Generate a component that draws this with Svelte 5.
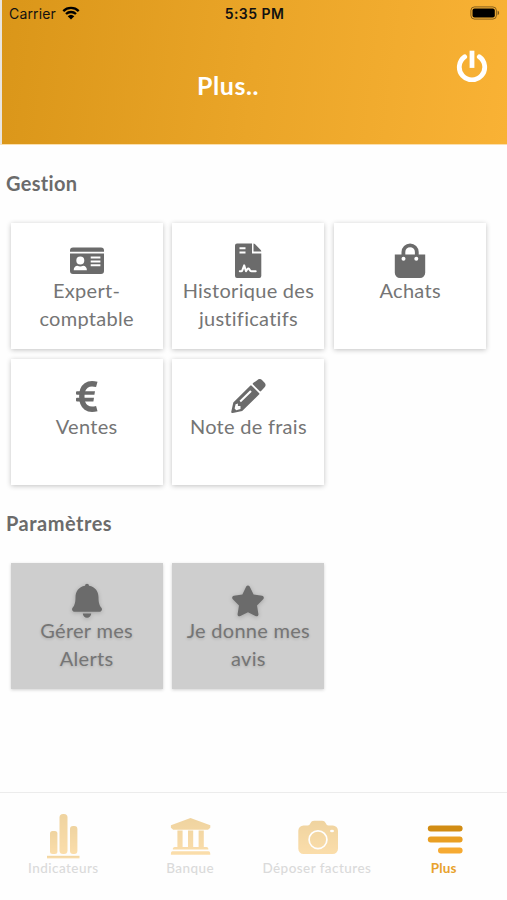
<script>
  const sections = [
    {
      title: 'Gestion',
      muted: false,
      cards: [
        { icon: 'id', lines: ['Expert-', 'comptable'] },
        { icon: 'file', lines: ['Historique des', 'justificatifs'] },
        { icon: 'bag', lines: ['Achats'] },
        { icon: 'euro', lines: ['Ventes'] },
        { icon: 'pencil', lines: ['Note de frais'] }
      ]
    },
    {
      title: 'Paramètres',
      muted: true,
      cards: [
        { icon: 'bell', lines: ['Gérer mes', 'Alerts'] },
        { icon: 'star', lines: ['Je donne mes', 'avis'] }
      ]
    }
  ];
  const tabs = [
    { icon: 'bars', label: 'Indicateurs', active: false },
    { icon: 'bank', label: 'Banque', active: false },
    { icon: 'camera', label: 'Déposer factures', active: false },
    { icon: 'plus', label: 'Plus', active: true }
  ];
</script>

{#snippet cardIcon(name)}
  <svg class="icon" viewBox="0 0 36 36" width="36" height="36" fill="currentColor">
    {#if name === 'id'}
      <path fill-rule="evenodd" d="M4 4.4h28a3 3 0 0 1 3 3v1.3H1V7.400a3 3 0 0 1 3-3zM1 10.600h34V28a3 3 0 0 1-3 3H4a3 3 0 0 1-3-3zM11.300 13.600a4 4 0 1 0 0 8 4 4 0 0 0 0-8zM4.700 27.300h13.200c0-3-1.700-4.600-3.700-4.600-1.900 1-3.900 1-5.800 0-2 0-3.700 1.600-3.700 4.600zM21.700 13.500v2h9.700v-2zM21.700 17.400v2h9.700v-2zM21.700 21.300v2h9.700v-2z" />
    {:else if name === 'file'}
      <path d="M7 .5h15v10h9.300V33a2 2 0 0 1-2 2H7a2 2 0 0 1-2-2V2.500a2 2 0 0 1 2-2zM23.500.5c.6 0 1 .2 1.400.6l5.800 5.800c.4.4.6.9.6 1.600h-7.800z" />
      <path d="M9.500 5.300h6M9.500 9.500h6" stroke="#fff" stroke-width="1.900" />
      <path d="M9.800 28.300h1.300c.7 0 1-.3 1.200-.9l1.900-5 1.800 5.800 1.500-2.200c.5-.7 1.200-.5 1.700.2l1 1.400c.4.6.8.700 1.500.7h4" fill="none" stroke="#fff" stroke-width="2" stroke-linecap="round" stroke-linejoin="round" />
    {:else if name === 'bag'}
      <path d="M2.800 11.500h30.400v18.300A5.200 5.200 0 0 1 28 35H8a5.200 5.200 0 0 1-5.200-5.200z" />
      <path d="M11.400 15.500V9a6.700 6.700 0 0 1 13.400 0v6.500" fill="none" stroke="currentColor" stroke-width="3.800" />
      <circle cx="11.500" cy="15.700" r="2" fill="#fff" />
      <circle cx="24.300" cy="15.700" r="2" fill="#fff" />
    {:else if name === 'euro'}
      <path d="M27.800 5.400c-8.300-2.300-15 1-15 12.100s6.700 14.400 15 12.100" fill="none" stroke="currentColor" stroke-width="5.400" />
      <path d="M8 12.200h18l-.6 3.600H8a1 1 0 0 1-1-1v-1.600a1 1 0 0 1 1-1zM8 18.800h17l-.6 3.600H8a1 1 0 0 1-1-1v-1.600a1 1 0 0 1 1-1z" />
    {:else if name === 'pencil'}
      <path d="M27.200 1.200a3.600 3.600 0 0 1 5 0l2.200 2.200a3.600 3.600 0 0 1 0 5l-3.300 3.700a1 1 0 0 1-1.500 0l-6.500-6.500a1 1 0 0 1 0-1.500z" />
      <path fill-rule="evenodd" d="M20.200 6.800a1 1 0 0 1 1.500 0l7.300 7.300a1 1 0 0 1 0 1.500L12.200 32 2.800 34a1.200 1.200 0 0 1-1.500-1.500l2-9zM20.200 11.300l-10.700 10.500 1.400 1.400L21.700 12.700zM5.600 25.200l-1 4.400 1.600 1.600 4.300-1.100v-3H7.900v-2.500z" />
    {:else if name === 'bell'}
      <path d="M20 2.700a2 2 0 1 0-4 0c-6.500 1.200-9.500 5.900-9.500 11.500 0 6.300-1.300 8.500-2.900 10.500C2.500 26 3 28.700 5.200 28.700h25.600c2.200 0 2.700-2.700 1.600-4-1.600-2-2.900-4.200-2.900-10.500 0-5.600-3-10.300-9.500-11.500zM13.800 30.600a4.200 4.200 0 0 0 8.400 0z" />
    {:else if name === 'star'}
      <path d="M16.200 3.500c.8-1.500 2.700-1.500 3.500 0l3.900 8 8.500 1.300c1.700.3 2.300 2.100 1.100 3.400L27 22.500l1.400 8.500c.3 1.700-1.400 2.800-2.900 2.100L18 29.200l-7.600 3.900C8.900 33.800 7.300 32.700 7.600 31L9 22.500l-6.200-6.300c-1.200-1.200-.6-3.100 1.100-3.400l8.500-1.300z" />
    {/if}
  </svg>
{/snippet}

{#snippet tabIcon(name)}
  <svg class="tab-icon" viewBox="0 0 44 46" width="44" height="46" fill="url(#amber)">
    {#if name === 'bars'}
      <rect x="9" y="18" width="7.400" height="23" rx="2.500" />
      <rect x="18.500" y="1" width="8" height="40" rx="3.500" />
      <rect x="29" y="13" width="7.400" height="28" rx="3" />
      <rect x="6" y="42.800" width="32.500" height="2.600" />
    {:else if name === 'bank'}
      <path d="M22.500 5 42.300 12.200v2.500l-2.300 2H5.200l-2.300-2v-2.500zM9.400 17.500h5.200V34H9.400zM20 17.500h5.200V34H20zM30.600 17.500h5.200V34h-5.200zM6.800 34h31.600c1.500 0 2 1 2 2.500H4.800c0-1.500.5-2.500 2-2.500zM4.500 38.200h36c1.300 0 1.800.8 1.800 3.600H2.900c0-2.800.4-3.600 1.600-3.600z" />
    {:else if name === 'camera'}
      <path d="M8.500 12.500h4.200c1.500 0 1.800-.6 2.700-2.200.9-1.700 1.900-2.500 3.700-2.500h8c1.800 0 2.800.8 3.700 2.500.9 1.600 1.200 2.200 2.700 2.200h4.300a5.200 5.200 0 0 1 5.200 5.200v18a5.200 5.200 0 0 1-5.200 5.200H8.500a5.200 5.200 0 0 1-5.200-5.200v-18a5.200 5.200 0 0 1 5.200-5.200z" />
      <circle cx="23" cy="26.700" r="8.900" fill="none" stroke="#fff" stroke-width="1.700" />
      <ellipse cx="37" cy="18" rx="2" ry="1.200" fill="#fff" />
    {:else}
      <rect x="5.800" y="12.500" width="34.800" height="6" rx="3" fill="#d18c13" />
      <rect x="5.800" y="23.600" width="34.800" height="6" rx="3" fill="#e99f23" />
      <rect x="16" y="34.600" width="24.600" height="6" rx="3" fill="#f6aa32" />
    {/if}
  </svg>
{/snippet}

<svg class="defs" width="0" height="0">
  <defs>
    <linearGradient id="amber" x1="0" y1="0" x2="0" y2="1">
      <stop offset="0" stop-color="#dc9a1f" />
      <stop offset="1" stop-color="#f7b23a" />
    </linearGradient>
  </defs>
</svg>

<div class="screen">
  <header>
    <div class="status">
      <div class="carrier">
        <span>Carrier</span>
        <svg viewBox="0 0 18 14" width="18" height="14">
          <path d="M1.300 5.100a11 11 0 0 1 15.400 0M4 8a7.200 7.200 0 0 1 10 0" fill="none" stroke="#000" stroke-width="2.300" />
          <path d="M9 13.500 5.700 10.300a4.800 4.800 0 0 1 6.600 0z" />
        </svg>
      </div>
      <div class="time">5:35 PM</div>
      <svg class="battery" viewBox="0 0 30 14" width="30" height="14">
        <rect x=".9" y=".9" width="25.500" height="12.200" rx="3.600" fill="none" stroke="#000" stroke-opacity=".45" />
        <rect x="2.500" y="2.500" width="22.300" height="9" rx="2" />
        <path d="M27.600 4.800c2 .6 2 3.800 0 4.400z" fill-opacity=".5" />
      </svg>
    </div>
    <div class="bar">
      <h1>Plus..</h1>
      <svg class="power" viewBox="0 0 32 32" width="32" height="32" fill="none" stroke="#fff" stroke-width="4.800" stroke-linecap="round">
        <path d="M8.700 6.800a12.700 12.700 0 1 0 14.600 0" />
        <path d="M16 .7v17.200" stroke-width="4.800" stroke-linecap="butt" />
      </svg>
    </div>
  </header>

  <main>
    {#each sections as section}
      <section class:muted={section.muted}>
        <h2>{section.title}</h2>
        <div class="grid">
          {#each section.cards as card}
            <div class="card">
              {@render cardIcon(card.icon)}
              {#each card.lines as line}
                <span>{line}</span>
              {/each}
            </div>
          {/each}
        </div>
      </section>
    {/each}
  </main>

  <nav>
    {#each tabs as tab}
      <div class="tab" class:active={tab.active}>
        {@render tabIcon(tab.icon)}
        <span>{tab.label}</span>
      </div>
    {/each}
  </nav>
</div>

<style>
  :global(body) { margin: 0; background: #fefefe; }
  .defs { position: absolute; }
  .screen {
    width: 507px;
    height: 900px;
    display: flex;
    flex-direction: column;
    overflow: hidden;
    background: #fefefe;
    color: #6b6b6b;
    font-family: Lato, "Noto Sans", sans-serif;
  }
  header {
    box-sizing: border-box;
    height: 145px;
    flex: none;
    border-left: 2px solid #e9e5df;
    border-bottom: 1px solid #fbdfae;
    background: linear-gradient(97deg, #da9619 0%, #eaa528 50%, #f9b235 100%);
  }
  .status {
    height: 28px;
    display: grid;
    grid-template-columns: 1fr auto 1fr;
    align-items: center;
    padding: 0 7px 0 7px;
    color: #111;
    font: 14px/28px Inter, sans-serif;
  }
  .carrier { display: flex; align-items: center; gap: 6px; letter-spacing: .15px; }
  .carrier svg { margin-top: -3px; }
  .time { font-weight: 600; letter-spacing: .45px; }
  .battery { justify-self: end; margin-top: -2px; }
  .bar { display: flex; position: relative; justify-content: center; padding-right: 53px; }
  h1 { margin: 42px 0 0; font-size: 25px; line-height: 30px; font-weight: 700; letter-spacing: .6px; color: #fff; }
  .power { position: absolute; right: 19px; top: 22px; }
  main { flex: 1; min-height: 0; }
  section { height: 340px; }
  section:last-child { height: auto; }
  h2 { margin: 0; padding: 26px 0 1px 6px; font-size: 20px; line-height: 24px; font-weight: 700; letter-spacing: .3px; }
  .muted h2 { letter-spacing: .5px; }
  .grid {
    display: grid;
    grid-template-columns: repeat(3, 152px);
    grid-auto-rows: 126px;
    gap: 10px 9.800px;
    padding: 27px 0 0 10.600px;
  }
  .card {
    box-sizing: border-box;
    display: flex;
    flex-direction: column;
    align-items: center;
    padding-top: 20px;
    background: #fff;
    box-shadow: 0 1px 5px rgba(0, 0, 0, .24);
    font-size: 20px;
    line-height: 28px;
    letter-spacing: .28px;
    white-space: nowrap;
    color: #757575;
  }
  .icon { flex: none; margin-bottom: -3px; color: #6b6b6b; }
  .muted .card {
    background: #cecece;
    box-shadow: 0 1px 3px rgba(0, 0, 0, .18);
    text-shadow: 0 1px 3px rgba(0, 0, 0, .18);
  }
  .muted .icon { filter: drop-shadow(0 1px 2px rgba(0, 0, 0, .2)); }
  nav {
    box-sizing: border-box;
    height: 108px;
    flex: none;
    display: grid;
    grid-template-columns: repeat(4, 1fr);
    border-top: 1px solid #ececec;
  }
  .tab {
    display: flex;
    flex-direction: column;
    align-items: center;
    padding-top: 20px;
    font-size: 13.500px;
    line-height: 18px;
    font-weight: 500;
    letter-spacing: .45px;
    color: #dadada;
    white-space: nowrap;
  }
  .tab-icon { flex: none; opacity: .42; }
  .active { color: #e8a22c; font-weight: 700; letter-spacing: .1px; }
  .active .tab-icon { opacity: 1; }
</style>
